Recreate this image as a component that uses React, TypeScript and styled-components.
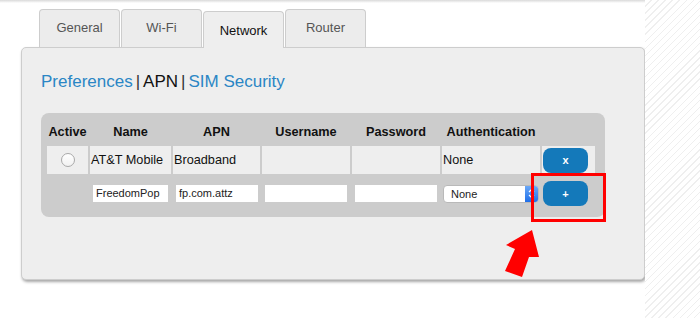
import React from 'react';
import styled, { createGlobalStyle } from 'styled-components';

const GlobalStyle = createGlobalStyle`
  html, body { margin: 0; padding: 0; background: #fff; }
  body { font-family: "Liberation Sans", Arial, Helvetica, sans-serif; }
`;

const Page = styled.div`
  position: relative;
  display: flex;
  width: 700px;
  height: 318px;
  overflow: hidden;
`;

const Main = styled.div`
  flex: none;
  width: 645px;
  box-sizing: border-box;
  padding: 9px 0 0 21px;
  background: linear-gradient(#d9d9d9, #fff 3px);
`;

const Stripes = styled.div`
  flex: 1;
  background: repeating-linear-gradient(135deg, #fff 0 4px, #efefef 4px 5px);
`;

const TabBar = styled.div`
  display: flex;
  align-items: flex-end;
  gap: 1px;
  height: 38px;
  margin-left: 18px;
`;

const Tab = styled.div<{ $active?: boolean }>`
  position: relative;
  z-index: ${p => (p.$active ? 1 : 0)};
  width: 81px;
  height: ${p => (p.$active ? '37px' : '38px')};
  margin-bottom: ${p => (p.$active ? '-1px' : '0')};
  box-sizing: border-box;
  padding-top: ${p => (p.$active ? '11px' : '10px')};
  border: 1px solid #cdcdcd;
  border-bottom: none;
  border-radius: 4px 4px 0 0;
  background: ${p => (p.$active ? '#eeeeee' : '#ececec')};
  color: ${p => (p.$active ? '#111' : '#555')};
  font-size: 13px;
  line-height: 16px;
  text-align: center;
`;

const Panel = styled.div`
  width: 624px;
  height: 233px;
  box-sizing: border-box;
  padding: 24px 0 0 19px;
  background: #eeeeee;
  border: 1px solid #cdcdcd;
  border-radius: 5px;
  box-shadow: 1px 2px 3px rgba(0, 0, 0, 0.35);
`;

const SubNav = styled.div`
  display: flex;
  align-items: center;
  height: 20px;
  margin-bottom: 21px;
  font-size: 17px;
  line-height: 20px;
`;

const NavLink = styled.span<{ $current?: boolean }>`
  color: ${p => (p.$current ? '#111' : '#2a86c5')};
`;

const Sep = styled.span`
  margin: 0 3px;
  color: #333;
`;

const TableBox = styled.div`
  width: 564px;
  box-sizing: border-box;
  padding: 0 4px 4px;
  background: #cccccc;
  border-radius: 8px;
`;

const Table = styled.table`
  table-layout: fixed;
  width: 552px;
  border-collapse: separate;
  border-spacing: 2px;
`;

const Th = styled.th`
  box-sizing: border-box;
  height: 29px;
  padding: 0 0 4px;
  vertical-align: bottom;
  text-align: center;
  font-size: 12.7px;
  font-weight: bold;
  line-height: 15px;
  color: #111;
`;

const Td = styled.td<{ $center?: boolean }>`
  box-sizing: border-box;
  height: 28px;
  padding: 0 1px;
  background: #eeeeee;
  font-size: 12.7px;
  color: #111;
  text-align: ${p => (p.$center ? 'center' : 'left')};
  vertical-align: middle;
  white-space: nowrap;
`;

const InputCell = styled.td<{ $pad?: number }>`
  box-sizing: border-box;
  height: 35px;
  padding: 0 0 0 ${p => p.$pad ?? 3}px;
  vertical-align: middle;
`;

const Radio = styled.span`
  display: inline-block;
  width: 14px;
  height: 14px;
  box-sizing: border-box;
  border: 1px solid #a9a9a9;
  border-radius: 50%;
  background: linear-gradient(#fff, #f1f1f1);
  vertical-align: middle;
`;

const TextInput = styled.div<{ $w: number }>`
  width: ${p => p.$w}px;
  height: 17px;
  box-sizing: border-box;
  padding: 0 3px;
  background: #fff;
  font-size: 11px;
  line-height: 17px;
  color: #222;
`;

const Select = styled.div`
  display: flex;
  align-items: center;
  width: 96px;
  height: 18px;
  box-sizing: border-box;
  border: 1px solid #b9b9b9;
  border-radius: 4px;
  background: #fff;
  overflow: hidden;
`;

const SelectText = styled.span`
  flex: 1;
  padding-left: 7px;
  font-size: 11px;
  color: #222;
`;

const SelectArrow = styled.span`
  display: flex;
  align-items: center;
  justify-content: center;
  width: 13px;
  height: 100%;
  background: linear-gradient(#6aa8f7, #1e6ee8);
`;

const BlueButton = styled.div`
  display: flex;
  align-items: center;
  justify-content: center;
  width: 45px;
  height: 25px;
  border-radius: 8px;
  background: #1479ba;
  color: #fff;
  font-size: 11px;
  font-weight: bold;
`;

const Highlight = styled.div`
  position: absolute;
  left: 531px;
  top: 173px;
  width: 75px;
  height: 49px;
  box-sizing: border-box;
  border: 3px solid #ff0000;
`;

const Arrow = styled.svg`
  position: absolute;
  left: 500px;
  top: 225px;
`;

const cols = [41, 81, 87, 88, 88, 98, 53];

export default function App() {
  return (
    <>
      <GlobalStyle />
      <Page>
        <Main>
          <TabBar>
            <Tab>General</Tab>
            <Tab>Wi-Fi</Tab>
            <Tab $active>Network</Tab>
            <Tab>Router</Tab>
          </TabBar>
          <Panel>
            <SubNav>
              <NavLink>Preferences</NavLink>
              <Sep>|</Sep>
              <NavLink $current>APN</NavLink>
              <Sep>|</Sep>
              <NavLink>SIM Security</NavLink>
            </SubNav>
            <TableBox>
              <Table>
                <colgroup>
                  {cols.map((w, i) => (
                    <col key={i} style={{ width: w }} />
                  ))}
                </colgroup>
                <thead>
                  <tr>
                    <Th>Active</Th>
                    <Th>Name</Th>
                    <Th>APN</Th>
                    <Th>Username</Th>
                    <Th>Password</Th>
                    <Th>Authentication</Th>
                    <Th />
                  </tr>
                </thead>
                <tbody>
                  <tr>
                    <Td $center>
                      <Radio />
                    </Td>
                    <Td>AT&amp;T Mobile</Td>
                    <Td>Broadband</Td>
                    <Td />
                    <Td />
                    <Td>None</Td>
                    <Td>
                      <BlueButton>x</BlueButton>
                    </Td>
                  </tr>
                  <tr>
                    <InputCell />
                    <InputCell>
                      <TextInput $w={75}>FreedomPop</TextInput>
                    </InputCell>
                    <InputCell>
                      <TextInput $w={82}>fp.com.attz</TextInput>
                    </InputCell>
                    <InputCell>
                      <TextInput $w={82} />
                    </InputCell>
                    <InputCell>
                      <TextInput $w={82} />
                    </InputCell>
                    <InputCell $pad={1}>
                      <Select>
                        <SelectText>None</SelectText>
                        <SelectArrow>
                          <svg width="7" height="11" viewBox="0 0 7 11">
                            <path d="M1 4 L3.5 1.5 L6 4 M1 7 L3.5 9.5 L6 7" fill="none" stroke="#fff" strokeWidth="1.2" />
                          </svg>
                        </SelectArrow>
                      </Select>
                    </InputCell>
                    <InputCell $pad={1}>
                      <BlueButton>+</BlueButton>
                    </InputCell>
                  </tr>
                </tbody>
              </Table>
            </TableBox>
          </Panel>
        </Main>
        <Stripes />
        <Highlight />
        <Arrow width="45" height="55" viewBox="0 0 45 55">
          <polygon points="32,5 6,20 15,24 5,46 22,52 29,32 39,32" fill="#ff0000" />
        </Arrow>
      </Page>
    </>
  );
}
